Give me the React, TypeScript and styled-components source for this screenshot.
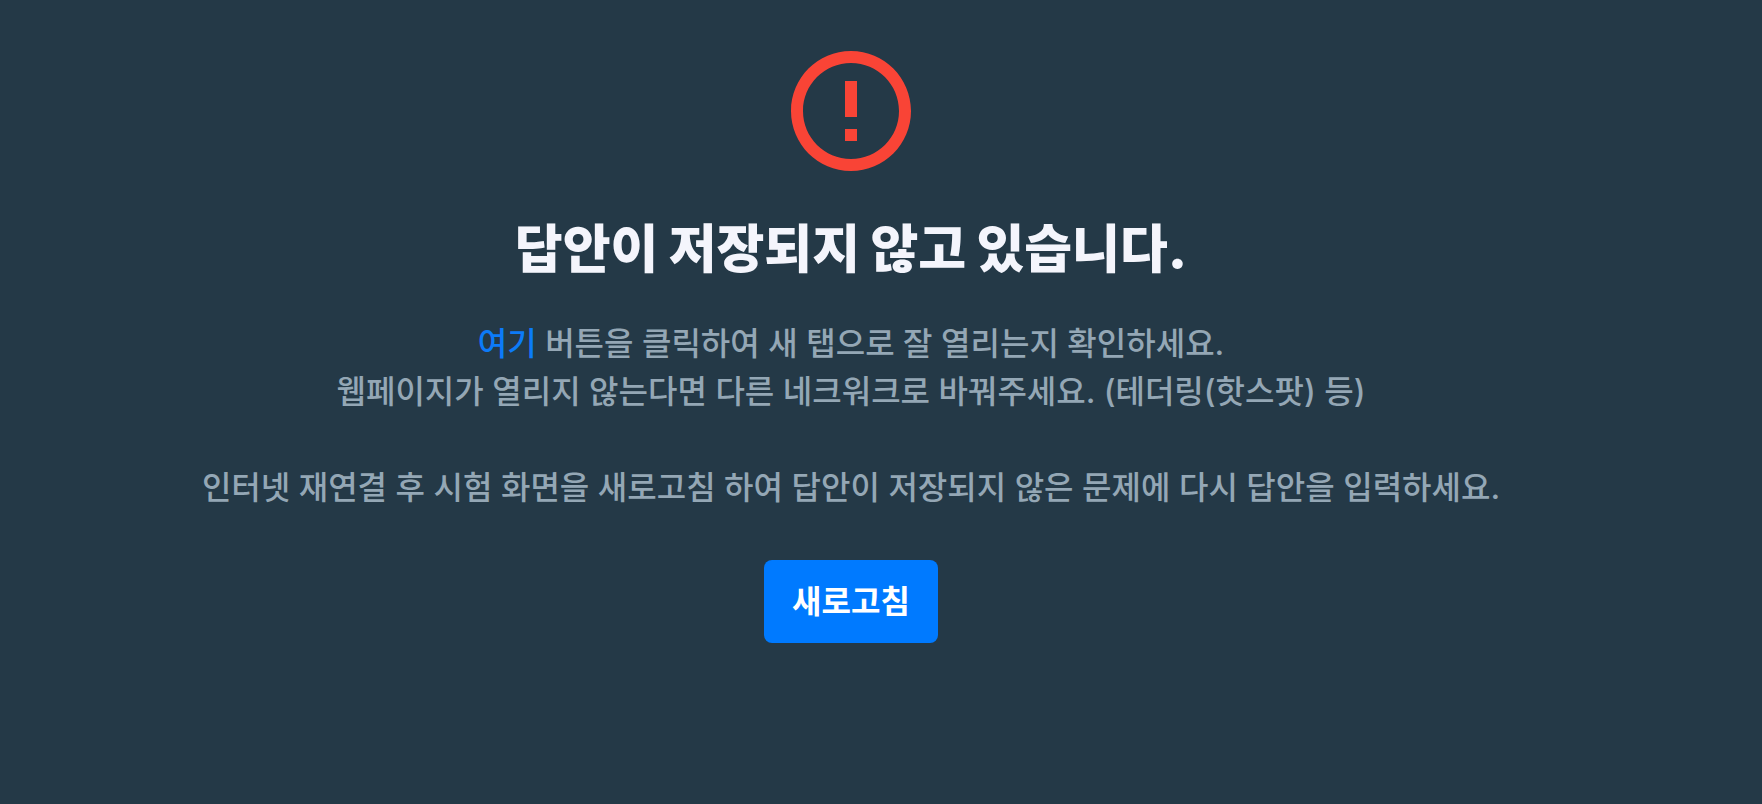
import React from 'react';
import styled, { createGlobalStyle } from 'styled-components';

const GlobalStyle = createGlobalStyle`
  * { box-sizing: border-box; }
  body {
    margin: 0;
    background: #243947;
    font-family: Inter, "Noto Sans CJK KR", sans-serif;
  }
`;

const Page = styled.main`
  display: flex;
  flex-direction: column;
  align-items: center;
  min-height: 100vh;
  padding: 39px 60px 40px 0;
  text-align: center;
  word-break: keep-all;
`;

const WarningIcon = styled.svg`
  width: 144px;
  height: 144px;
  fill: #f94436;
`;

const Title = styled.h1`
  margin: 29px 0 0;
  color: #f4f5fc;
  font-size: 52px;
  font-weight: 900;
  line-height: 76px;
`;

const Message = styled.p`
  margin: 32px 0 0;
  color: #94a7b5;
  font-size: 32px;
  font-weight: 500;
  line-height: 48px;
`;

const Link = styled.a`
  color: #0c7bf8;
  text-decoration: none;
`;

const RefreshButton = styled.button`
  margin-top: 48px;
  padding: 16px 28px;
  border: 0;
  border-radius: 8px;
  background: #007aff;
  color: #fff;
  font-family: inherit;
  font-size: 32px;
  font-weight: 700;
  line-height: 51px;
  cursor: pointer;
`;

export default function App() {
  return (
    <>
      <GlobalStyle />
      <Page>
        <WarningIcon viewBox="0 0 24 24" aria-hidden="true">
          <path d="M11 15h2v2h-2zm0-8h2v6h-2zm.99-5C6.47 2 2 6.48 2 12s4.47 10 9.99 10C17.52 22 22 17.52 22 12S17.52 2 11.99 2zM12 20c-4.42 0-8-3.58-8-8s3.58-8 8-8 8 3.58 8 8-3.58 8-8 8z" />
        </WarningIcon>
        <Title>답안이 저장되지 않고 있습니다.</Title>
        <Message>
          <Link href="#">여기</Link> 버튼을 클릭하여 새 탭으로 잘 열리는지 확인하세요.
          <br />
          웹페이지가 열리지 않는다면 다른 네크워크로 바꿔주세요. (테더링(핫스팟) 등)
          <br />
          <br />
          인터넷 재연결 후 시험 화면을 새로고침 하여 답안이 저장되지 않은 문제에 다시 답안을 입력하세요.
        </Message>
        <RefreshButton type="button">새로고침</RefreshButton>
      </Page>
    </>
  );
}
